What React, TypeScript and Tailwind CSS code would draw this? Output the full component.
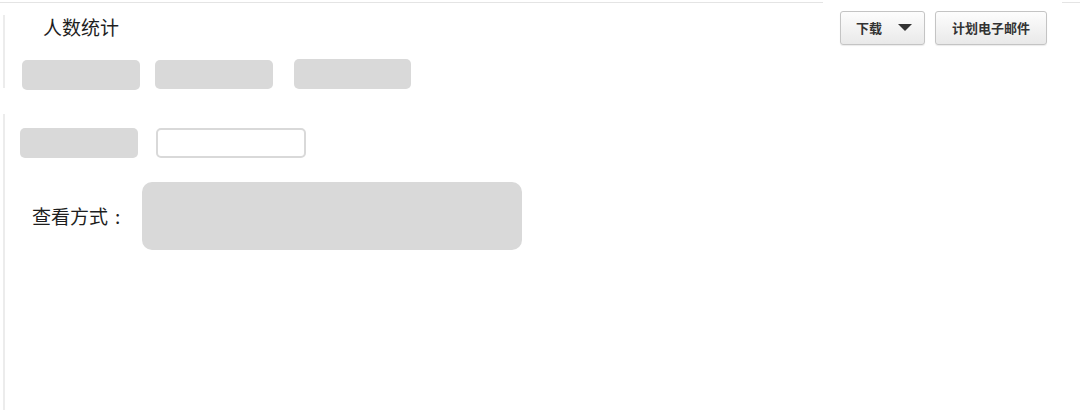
const cjk = { fontFamily: '"Noto Sans CJK SC", "Noto Sans", sans-serif' };

function Pill({ w, h = "h-[30px]", outline = false }: { w: string; h?: string; outline?: boolean }) {
  return outline ? (
    <div className={`${w} ${h} rounded-[5px] border-2 border-[#d9d9d9] bg-white`} />
  ) : (
    <div className={`${w} ${h} rounded-[5px] bg-[#d9d9d9]`} />
  );
}

function ToolButton({ children, className = "" }: { children: React.ReactNode; className?: string }) {
  return (
    <button
      className={`h-[34px] flex items-center rounded-[3px] border border-[#c4c4c4] bg-gradient-to-b from-[#fdfdfd] to-[#e9e9e9] shadow-[0_1px_1px_rgba(0,0,0,0.08)] text-[13px] font-bold text-[#333] ${className}`}
      style={cjk}
    >
      {children}
    </button>
  );
}

export default function App() {
  return (
    <div className="w-[1080px] h-[410px] bg-white overflow-hidden" style={cjk}>
      {/* top rule, broken behind the toolbar */}
      <div className="flex h-px mt-[2px]">
        <div className="w-[823px] bg-[#e4e4e4]" />
        <div className="flex-1" />
        <div className="w-[18px] bg-[#e4e4e4]" />
      </div>

      {/* header section */}
      <div className="flex items-start pl-[3px]">
        <div className="w-[2px] h-[73px] mt-[12px] bg-[#ececec]" />
        <div className="flex flex-col mt-[12px]">
          <div className="pl-[38px] text-[19px] leading-[24px] text-[#1e1e1e]">人数统计</div>
          <div className="flex items-start mt-[21px] pl-[17px]">
            <Pill w="w-[118px]" />
            <div className="ml-[15px]">
              <Pill w="w-[118px]" h="h-[29px]" />
            </div>
            <div className="ml-[21px] -mt-px">
              <Pill w="w-[117px]" />
            </div>
          </div>
        </div>
        <div className="flex-1" />
        <div className="flex gap-[10px] mt-[8px] mr-[33px]">
          <ToolButton className="w-[85px] pl-[15px]">
            <span>下载</span>
            <svg width="14" height="8" viewBox="0 0 14 8" className="ml-[16px]">
              <path d="M0 0 H14 L7 7 Z" fill="#333" />
            </svg>
          </ToolButton>
          <ToolButton className="w-[112px] justify-center">计划电子邮件</ToolButton>
        </div>
      </div>

      {/* body section */}
      <div className="flex pl-[3px] mt-[24px]">
        <div className="w-[2px] h-[300px] bg-[#ececec]" />
        <div className="flex flex-col">
          <div className="flex items-start mt-[14px] pl-[15px]">
            <Pill w="w-[118px]" />
            <div className="ml-[18px]">
              <Pill w="w-[150px]" outline />
            </div>
          </div>
          <div className="flex items-center mt-[24px]">
            <div className="pl-[27px] w-[137px] text-[19px] leading-[24px] text-[#1e1e1e] whitespace-nowrap">
              查看方式<span className="ml-[7px]">:</span>
            </div>
            <div className="w-[380px] h-[68px] rounded-[10px] bg-[#d9d9d9]" />
          </div>
        </div>
      </div>
    </div>
  );
}
